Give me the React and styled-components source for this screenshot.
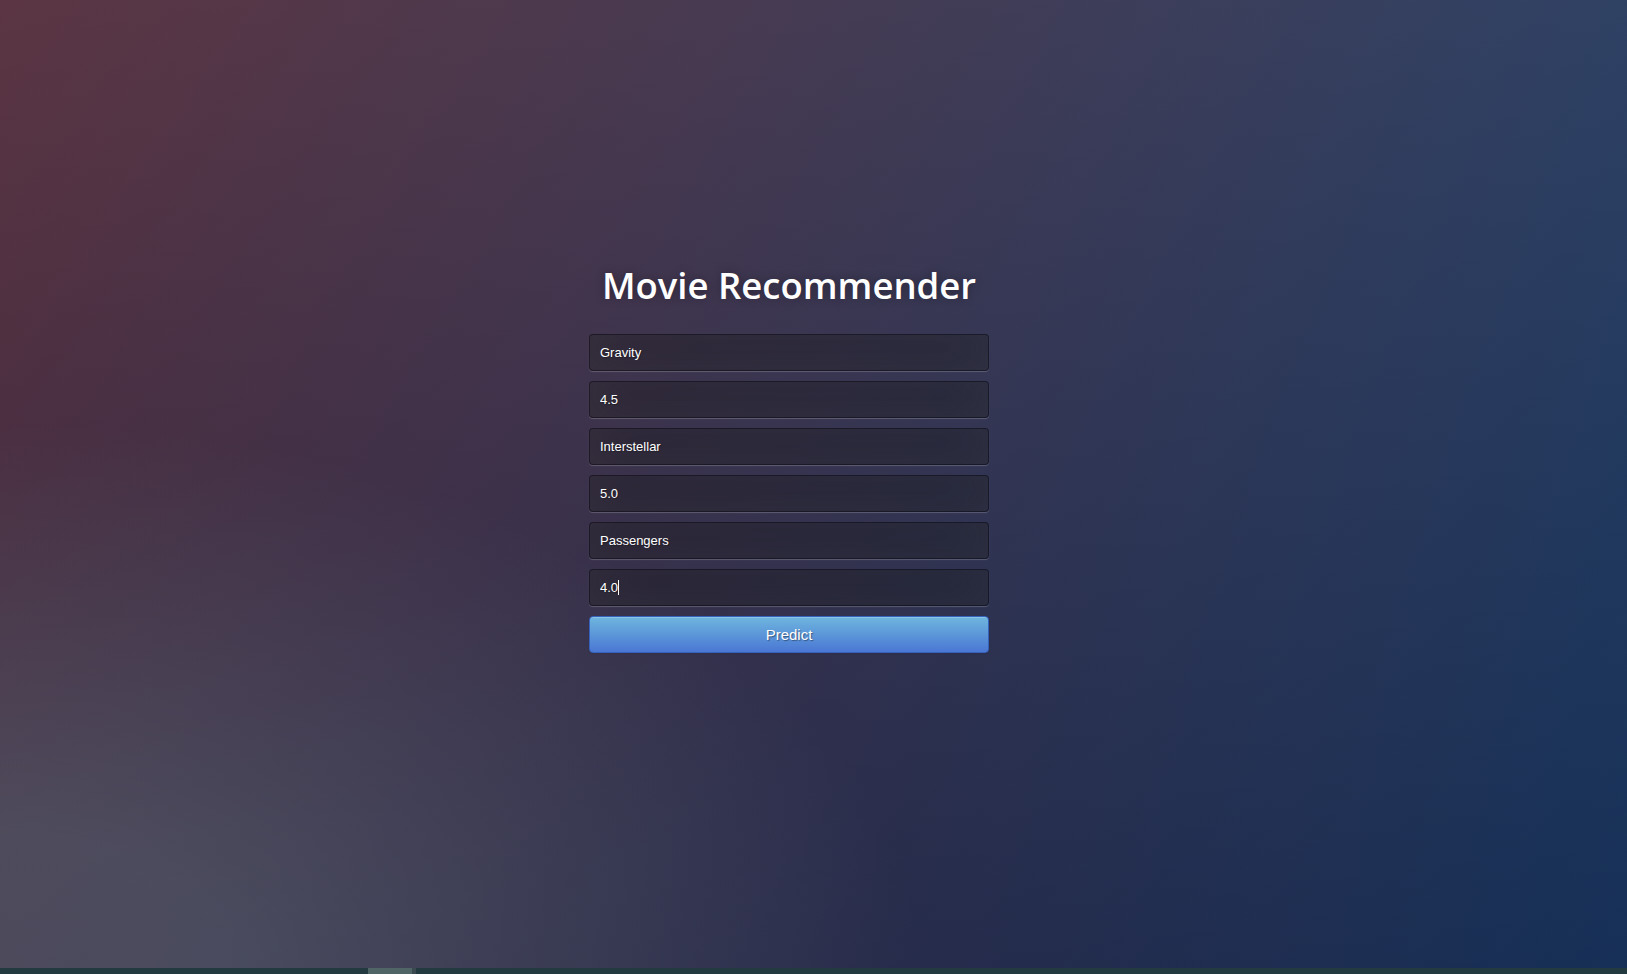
import React from "react";
import styled, { createGlobalStyle } from "styled-components";

const Global = createGlobalStyle`
  html, body { margin: 0; padding: 0; height: 100%; }
  body {
    font-family: "Liberation Sans", Arial, sans-serif;
    background: #092756;
    background:
      radial-gradient(ellipse at 0% 100%, rgba(104,128,138,.4) 10%, rgba(138,114,76,0) 40%),
      linear-gradient(to bottom, rgba(57,173,219,.25) 0%, rgba(42,60,87,.4) 100%),
      linear-gradient(135deg, #670d10 0%, #092756 100%);
    background-attachment: fixed;
    overflow: hidden;
  }
  #root { height: 100%; }
`;

const Page = styled.div`
  height: 100vh;
  display: flex;
  flex-direction: column;
`;

const Main = styled.main`
  flex: 1;
  display: flex;
  justify-content: center;
  align-items: flex-start;
  padding: 259px 49px 0 0;
`;

const Card = styled.div`
  width: 400px;
  display: flex;
  flex-direction: column;
`;

const Title = styled.h1`
  margin: 0 0 23px;
  font-family: "Open Sans", sans-serif;
  font-weight: 600;
  font-size: 36.5px;
  line-height: 52px;
  letter-spacing: 0;
  white-space: nowrap;
  color: #fff;
  text-align: center;
  text-shadow: 0 0 10px rgba(0,0,0,0.3);
`;

const Form = styled.form`
  display: flex;
  flex-direction: column;
  gap: 10px;
`;

const FieldWrap = styled.div`
  position: relative;
  ${(p) =>
    p.$caret &&
    `&::after {
      content: "";
      position: absolute;
      left: ${p.$caret}px;
      top: 11px;
      width: 1px;
      height: 15px;
      background: #fff;
      pointer-events: none;
    }`}
`;

const Field = styled.input`
  box-sizing: border-box;
  display: block;
  width: 100%;
  height: 37px;
  margin: 0;
  padding: 0 10px;
  font-family: "Liberation Sans", Arial, sans-serif;
  font-size: 13px;
  color: #fff;
  text-shadow: 1px 1px 1px rgba(0,0,0,0.3);
  background: rgba(0,0,0,0.3);
  border: 1px solid rgba(0,0,0,0.3);
  border-radius: 4px;
  outline: none;
  box-shadow: inset 0 -5px 45px rgba(100,100,100,0.2), 0 1px 1px rgba(255,255,255,0.2);
  caret-color: transparent;
`;

const Button = styled.button`
  box-sizing: border-box;
  width: 100%;
  height: 37px;
  padding: 0 14px;
  font-family: "Liberation Sans", Arial, sans-serif;
  font-size: 15px;
  color: #fff;
  text-shadow: 1px 1px 1px rgba(0,0,0,0.4);
  background: linear-gradient(to bottom, #6eb6de, #4a77d4);
  border: 1px solid #3762bc;
  border-radius: 4px;
  box-shadow: inset 0 1px 0 rgba(255,255,255,0.2), 0 1px 2px rgba(0,0,0,0.05);
  cursor: pointer;
`;

const ScrollTrack = styled.div`
  height: 6px;
  background: #233a40;
  display: flex;
`;

const ScrollGap = styled.div`
  width: ${(p) => p.$w}px;
`;

const ScrollThumb = styled.div`
  width: 44px;
  background: #4f6566;
`;

const ScrollEdge = styled.div`
  width: 4px;
  background: #3a4a50;
`;

const fields = [
  { name: "movie1", value: "Gravity" },
  { name: "rating1", value: "4.5" },
  { name: "movie2", value: "Interstellar" },
  { name: "rating2", value: "5.0" },
  { name: "movie3", value: "Passengers" },
  { name: "rating3", value: "4.0", caret: 29 },
];

export default function App() {
  return (
    <Page>
      <Global />
      <Main>
        <Card>
          <Title>Movie Recommender</Title>
          <Form onSubmit={(e) => e.preventDefault()}>
            {fields.map((f) => (
              <FieldWrap key={f.name} $caret={f.caret}>
                <Field name={f.name} defaultValue={f.value} />
              </FieldWrap>
            ))}
            <Button type="submit">Predict</Button>
          </Form>
        </Card>
      </Main>
      <ScrollTrack>
        <ScrollGap $w={368} />
        <ScrollThumb />
        <ScrollEdge />
      </ScrollTrack>
    </Page>
  );
}
